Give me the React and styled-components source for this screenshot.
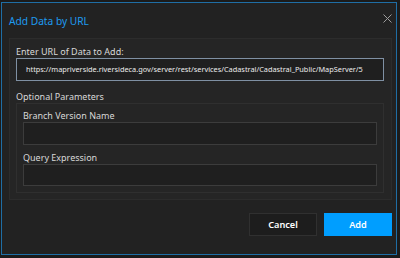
import React from "react";
import styled, { createGlobalStyle } from "styled-components";

const Global = createGlobalStyle`
  html, body { margin: 0; padding: 0; background: #1b1b1b; }
  body { width: 400px; height: 258px; overflow: hidden; font-family: "Noto Sans", "Open Sans", sans-serif; }
`;

const Dialog = styled.div`
  box-sizing: border-box;
  margin: 2px 0 0 1px;
  width: 396px;
  height: 253px;
  border: 1px solid #1f6ea5;
  background: #222222;
  display: flex;
  flex-direction: column;
  padding: 0 4px 0 7px;
`;

const Header = styled.div`
  box-sizing: border-box;
  height: 35px;
  display: flex;
  align-items: flex-start;
  justify-content: space-between;
  padding-top: 10px;
`;

const Title = styled.div`
  color: #1e9bf0;
  font-size: 10.2px;
  line-height: 16px;
`;

const Close = styled.button`
  border: 0;
  background: none;
  padding: 0;
  width: 9px;
  height: 9px;
  margin-top: 1px;
  display: flex;
`;

const Group = styled.div`
  box-sizing: border-box;
  height: 162px;
  border: 1px solid #2c2c2c;
  background: #252525;
  padding: 7px 7px 0 6px;
  display: flex;
  flex-direction: column;
`;

const Label = styled.div`
  color: #d8d8d8;
  font-size: 9px;
  line-height: 12px;
  height: 12px;
  margin-top: ${(p) => p.$top || 0}px;
  white-space: nowrap;
`;

const UrlInput = styled.div`
  box-sizing: border-box;
  height: 23px;
  border: 1px solid #7f90a3;
  background: #1f1f1f;
  color: #ececec;
  font-size: 7.35px;
  line-height: 20px;
  padding-left: 9px;
  white-space: nowrap;
  overflow: hidden;
`;

const SubGroup = styled.div`
  box-sizing: border-box;
  height: 90px;
  border: 1px solid #2f2f2f;
  padding: 6px 6px 0 6px;
  display: flex;
  flex-direction: column;
`;

const Field = styled.div`
  box-sizing: border-box;
  height: ${(p) => p.$h || 23}px;
  border: 1px solid #3c3c3c;
  background: #1f1f1f;
`;

const Footer = styled.div`
  display: flex;
  justify-content: flex-end;
  gap: 7px;
  margin-top: 13px;
`;

const Button = styled.button`
  box-sizing: border-box;
  width: 68px;
  height: 23px;
  border: 1px solid ${(p) => (p.$primary ? "#009eff" : "#303030")};
  background: ${(p) => (p.$primary ? "#009eff" : "#1d1d1d")};
  color: #ffffff;
  font-family: "Noto Sans", "Open Sans", sans-serif;
  font-size: 9.2px;
  font-weight: 600;
  padding: 0;
`;

export default function App() {
  return (
    <>
      <Global />
      <Dialog>
        <Header>
          <Title>Add Data by URL</Title>
          <Close aria-label="Close">
            <svg width="9" height="9" viewBox="0 0 9 9">
              <path d="M0.5 0.5 L8.5 8.5 M8.5 0.5 L0.5 8.5" stroke="#9c9c9c" strokeWidth="1" />
            </svg>
          </Close>
        </Header>
        <Group>
          <Label>Enter URL of Data to Add:</Label>
          <UrlInput>https://mapriverside.riversideca.gov/server/rest/services/Cadastral/Cadastral_Public/MapServer/5</UrlInput>
          <Label $top={10}>Optional Parameters</Label>
          <SubGroup>
            <Label>Branch Version Name</Label>
            <Field $h={23} />
            <Label $top={7}>Query Expression</Label>
            <Field $h={22} />
          </SubGroup>
        </Group>
        <Footer>
          <Button>Cancel</Button>
          <Button $primary>Add</Button>
        </Footer>
      </Dialog>
    </>
  );
}
